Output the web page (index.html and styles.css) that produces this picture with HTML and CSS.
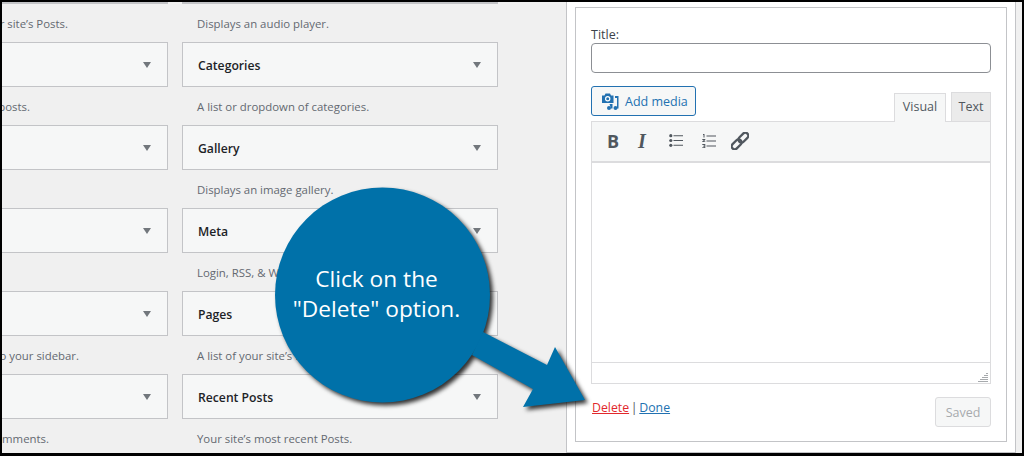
FILE: index.html
```html
<!DOCTYPE html>
<html lang="en">
<head>
<meta charset="utf-8">
<title>Widgets</title>
<link rel="stylesheet" href="styles.css">
</head>
<body>
<div class="frame">
  <section class="available">
    <div class="widget-grid">
      <div class="item first"><div class="card"></div><p class="desc clip end-66"><span>A monthly archive of your site’s Posts.</span></p></div>
      <div class="item first"><div class="card"></div><p class="desc">Displays an audio player.</p></div>

      <div class="item"><div class="card"><i class="tri"></i></div><p class="desc clip end-28"><span>A calendar of your site’s posts.</span></p></div>
      <div class="item"><div class="card"><b>Categories</b><i class="tri"></i></div><p class="desc">A list or dropdown of categories.</p></div>

      <div class="item"><div class="card"><i class="tri"></i></div><p class="desc"></p></div>
      <div class="item"><div class="card"><b>Gallery</b><i class="tri"></i></div><p class="desc">Displays an image gallery.</p></div>

      <div class="item"><div class="card"><i class="tri"></i></div><p class="desc"></p></div>
      <div class="item"><div class="card"><b>Meta</b><i class="tri"></i></div><p class="desc">Login, RSS, &amp; WordPress.org links.</p></div>

      <div class="item"><div class="card"><i class="tri"></i></div><p class="desc clip end-77"><span>Add a navigation menu to your sidebar.</span></p></div>
      <div class="item"><div class="card"><b>Pages</b><i class="tri"></i></div><p class="desc">A list of your site’s Pages.</p></div>

      <div class="item"><div class="card"><i class="tri"></i></div><p class="desc clip end-47"><span>Your site’s most recent comments.</span></p></div>
      <div class="item"><div class="card"><b>Recent Posts</b><i class="tri"></i></div><p class="desc">Your site’s most recent Posts.</p></div>
    </div>
  </section>

  <section class="sidebar">
    <div class="widget-box">
      <label class="title-label">Title:</label>
      <div class="title-input"></div>
      <div class="editor-tools">
        <button class="add-media">
          <svg class="media-icon" width="18" height="18" viewBox="0 0 18 18"><path fill="#2271b1" d="M1 3.500h2.500l1-2h4.500l1 2H12.500V11H1z"/><circle cx="6.700" cy="6.800" r="2.700" fill="#fff"/><circle cx="6.700" cy="6.800" r="1.500" fill="#2271b1"/><path fill="#2271b1" d="M14 4h3.500v12.500h-1.500V6h-2z"/><circle cx="14.500" cy="16" r="2" fill="#2271b1"/><path fill="#2271b1" d="M8.500 12h3v4.500h-1.500z"/><circle cx="8" cy="16" r="2" fill="#2271b1"/></svg>
          Add media
        </button>
        <div class="tabs">
          <span class="tab active">Visual</span>
          <span class="tab">Text</span>
        </div>
      </div>
      <div class="editor">
        <div class="toolbar">
          <span class="tb tb-b">B</span>
          <span class="tb tb-i">I</span>
          <svg class="tb-svg" width="14" height="13" viewBox="0 0 14 13"><g fill="#50575e"><circle cx="1.800" cy="1.700" r="1.600"/><circle cx="1.800" cy="6.500" r="1.600"/><circle cx="1.800" cy="11.300" r="1.600"/><path d="M4.500 1.200h9.500v1H4.500zM4.500 6h9.500v1H4.500zM4.500 10.800h9.500v1H4.500z"/></g></svg>
          <svg class="tb-svg tb-num" width="14" height="14" viewBox="0 0 14 14"><g fill="#50575e"><path d="M1 0h1.500v3.500H1.500V1H1zM.3 5h3v.9L1.700 7.200h1.600v.8h-3v-.8L2 5.900H.3zM.3 10h3v4h-3v-.8h2v-.8H1v-.7h1.300v-.8h-2z"/><path d="M4.500 1.500h9.500v1H4.500zM4.500 6.500h9.500v1H4.500zM4.500 11.500h9.500v1H4.500z"/></g></svg>
          <svg class="tb-svg" width="18" height="18" viewBox="0 0 18 18"><g fill="none" stroke="#50575e" stroke-width="2.300" stroke-linejoin="round" transform="rotate(-45 9 9)"><rect x="-1.500" y="6" width="11.500" height="6" rx="3"/><rect x="8" y="6" width="11.500" height="6" rx="3"/></g></svg>
        </div>
        <div class="editor-body"></div>
        <div class="status">
          <svg class="grip" width="12" height="12" viewBox="0 0 12 12"><path stroke="#a7aaad" stroke-width="1" d="M9 2.500h2M7 4.500h4M5 6.500h6M3 8.500h8M1 10.500h10"/></svg>
        </div>
      </div>
      <div class="actions">
        <p class="links"><a class="del">Delete</a> | <a class="done">Done</a></p>
        <button class="saved">Saved</button>
      </div>
    </div>
  </section>

  <aside class="callout">
    <svg class="callout-shape" width="340" height="240" viewBox="0 0 340 240">
      <g fill="#0071a9">
        <circle cx="122.500" cy="115" r="107.500"/>
        <path d="M223 152L287 185L295 167L325 220L263 227L273 209L212 175Z"/>
      </g>
    </svg>
    <p class="callout-text">Click on the<br>"Delete" option.</p>
  </aside>
</div>
</body>
</html>
```
FILE: styles.css
```css
* { box-sizing: border-box; }
html, body { margin: 0; padding: 0; }
body { width: 1024px; height: 456px; overflow: hidden; background: #000; }

.frame {
  position: relative;
  width: 1024px;
  height: 456px;
  padding: 2px 2px 3px 2px;
  display: flex;
  overflow: hidden;
  font-family: "Open Sans", "Noto Sans", sans-serif;
  font-size: 12.500px;
  color: #3c434a;
  background: #f0f0f0;
  background-clip: content-box;
}

/* Available widgets */
.available { width: 564px; flex: none; overflow: hidden; }
.widget-grid {
  display: grid;
  grid-template-columns: 166px 316px;
  grid-template-rows: 40px;
  column-gap: 14px;
  grid-auto-rows: 83px;
  align-content: start;
}
.item { min-width: 0; overflow: hidden; }
.card {
  height: 45px;
  background: #f6f7f7;
  border: 1px solid #c3c4c7;
  padding: 0 16px 0 15px;
  display: flex;
  align-items: center;
  justify-content: space-between;
  color: #1d2327;
}
.item:nth-child(odd) .card { border-left: 0; justify-content: flex-end; }
.first .card { height: 1px; background: #c3c4c7; }
.card b { font-weight: 600; font-size: 12.200px; margin-top: 2px; }
.tri {
  width: 0; height: 0;
  margin-top: 1px;
  border-style: solid;
  border-width: 6px 4.500px 0;
  border-color: #72777c transparent transparent;
}
.desc {
  margin: 11px 0 0;
  padding-left: 15px;
  height: 18px;
  line-height: 18px;
  font-size: 11.400px;
  color: #646970;
  white-space: nowrap;
}
.clip { display: flex; justify-content: flex-end; overflow: hidden; padding-left: 0; }
.clip span { flex: none; }
.end-66 { padding-right: 100px; }
.end-28 { padding-right: 138px; }
.end-77 { padding-right: 89px; }
.end-47 { padding-right: 119px; }

/* Sidebar panel */
.sidebar {
  width: 450px;
  flex: none;
  background: #fff;
  border: 1px solid #c3c4c7;
  border-top: 0;
  padding: 5px 8px 10px;
  display: flex;
}
.widget-box {
  flex: 1;
  border: 1px solid #c3c4c7;
  padding: 18px 15px 0;
  display: flex;
  flex-direction: column;
}
.title-label { display: block; height: 16px; line-height: 18px; margin-bottom: 1px; }
.title-input {
  height: 30px;
  border: 1px solid #8c8f94;
  border-radius: 4px;
  background: #fff;
}
.editor-tools {
  margin-top: 13px;
  height: 35px;
  display: flex;
  justify-content: space-between;
  align-items: flex-start;
}
.add-media {
  height: 30px;
  width: 105px;
  padding: 0 0 0 9px;
  display: flex;
  align-items: center;
  gap: 6px;
  border: 1px solid #2271b1;
  border-radius: 3px;
  background: #f6f7f7;
  color: #2271b1;
  font: inherit;
}
.media-icon { flex: none; }
.tabs { display: flex; gap: 5px; align-self: flex-end; }
.tab {
  width: 40px;
  height: 29px;
  line-height: 27px;
  text-align: center;
  border: 1px solid #dcdcde;
  border-bottom: 0;
  background: #ebebeb;
  color: #50575e;
}
.tab.active { width: 52px; background: #f6f7f7; position: relative; top: 1px; line-height: 25px; }
.editor { border: 1px solid #dcdcde; border-top: 0; display: flex; flex-direction: column; height: 263px; }
.toolbar {
  height: 42px;
  margin: 0 -1px;
  border: 1px solid #dcdcde;
  border-bottom: 2px solid #dcdcde;
  background: #f6f7f7;
  display: flex;
  align-items: center;
  padding: 0 0 2px 15px;
}
.tb { width: 31px; font-size: 18px; color: #50575e; font-weight: 700; line-height: 1; }
.tb-b { font-family: "Open Sans", sans-serif; }
.tb-i { font-family: "Liberation Serif", serif; font-style: italic; font-size: 20px; }
.tb-svg { margin-right: 19px; flex: none; }
.tb-num { margin-right: 15px; }
.editor-body { flex: 1; background: #fff; }
.status { height: 21px; border-top: 1px solid #dcdcde; display: flex; justify-content: flex-end; align-items: flex-end; }
.grip { margin: 0 1px 0 0; }
.actions { display: flex; justify-content: space-between; align-items: flex-start; margin-top: 13px; }
.links { margin: 2px 0 0 1px; line-height: 18px; color: #50575e; font-size: 12.300px; word-spacing: -1.500px; }
.del { color: #e2282c; text-decoration: underline; }
.done { color: #2271b1; text-decoration: underline; }
.saved {
  width: 56px; height: 30px;
  padding: 0;
  border: 1px solid #dcdcde;
  border-radius: 3px;
  background: #f6f7f7;
  color: #a7aaad;
  font: inherit;
}

/* Callout overlay */
.callout { position: absolute; left: 260px; top: 180px; width: 340px; height: 240px; }
.callout-shape { display: block; filter: drop-shadow(3px 3px 2px rgba(0,0,0,.8)); }
.callout-text {
  position: absolute;
  left: 9px; top: 84px;
  width: 215px;
  margin: 0;
  text-align: center;
  color: #fff;
  font-size: 22.700px;
  line-height: 29.500px;
}
```
